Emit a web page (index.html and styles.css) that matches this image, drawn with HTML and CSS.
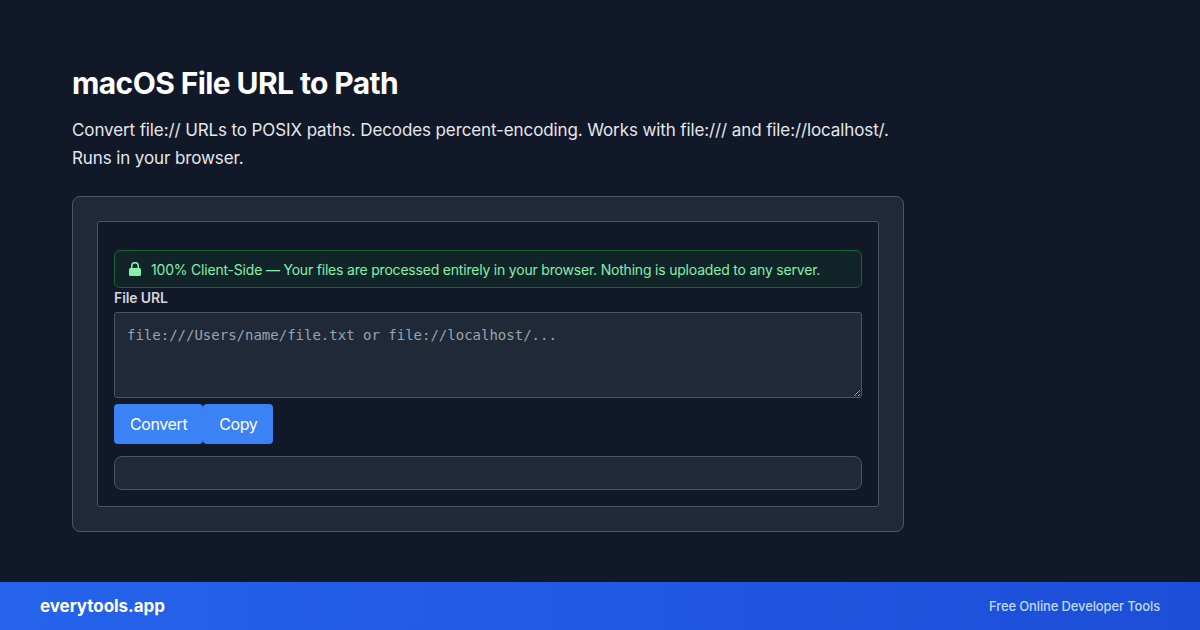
FILE: index.html
```html
<!DOCTYPE html>
<html lang="en">
<head>
    <meta charset="UTF-8">
    <meta name="viewport" content="width=device-width, initial-scale=1.0">
    <title>macOS File URL to Path</title>
    <link rel="stylesheet" href="styles.css">
</head>
<body>
    <main class="page">
        <h1>macOS File URL to Path</h1>
        <p class="intro">Convert file:// URLs to POSIX paths. Decodes percent-encoding. Works with file:/// and file://localhost/. Runs in your browser.</p>

        <div class="card">
            <div class="tool">
                <!-- Privacy notice -->
                <div class="notice">
                    <svg class="lock" width="12" height="14" viewBox="0 0 12 14" aria-hidden="true">
                        <path d="M2.75 6.5V3.9a3.25 3.25 0 0 1 6.5 0v2.6" fill="none" stroke="#86efac" stroke-width="1.5"/>
                        <rect x="0" y="6" width="12" height="8" rx="1.5" fill="#86efac"/>
                    </svg>
                    <span>100% Client-Side — Your files are processed entirely in your browser. Nothing is uploaded to any server.</span>
                </div>

                <label class="field-label" for="fileUrl">File URL</label>
                <textarea id="fileUrl" class="field-input" placeholder="file:///Users/name/file.txt or file://localhost/..."></textarea>

                <div class="actions">
                    <button class="btn">Convert</button>
                    <button class="btn">Copy</button>
                </div>

                <div class="output"></div>
            </div>
        </div>
    </main>

    <footer class="brand-bar">
        <span class="brand">everytools.app</span>
        <span class="tagline">Free Online Developer Tools</span>
    </footer>
</body>
</html>
```

FILE: styles.css
```css
* {
    box-sizing: border-box;
}
html, body {
    height: 100%;
}
body {
    margin: 0;
    display: flex;
    flex-direction: column;
    overflow: hidden;
    background-color: #111827;
    color: #f3f4f6;
    font-family: Inter, "Liberation Sans", sans-serif;
}
.page {
    flex: 1;
    width: 832px;
    margin-left: 72px;
    padding-top: 64px;
}
h1 {
    margin: 0 0 14px;
    font-size: 30px;
    line-height: 38px;
    font-weight: 700;
    letter-spacing: -0.6px;
    color: #fff;
}
.intro {
    margin: 0 0 24px;
    font-size: 17px;
    line-height: 28px;
    letter-spacing: -0.11px;
    color: #e5e7eb;
}
.card {
    padding: 24px;
    background-color: #1f2937;
    border: 1px solid #4b5563;
    border-radius: 8px;
}
.tool {
    padding: 28px 16px 16px;
    background-color: #111827;
    border: 1px solid #4b5563;
    border-radius: 3px;
}
.notice {
    display: flex;
    align-items: center;
    gap: 10px;
    height: 38px;
    padding: 0 14px;
    background-color: rgba(20, 83, 45, 0.22);
    border: 1px solid #166534;
    border-radius: 6px;
    font-size: 14px;
    letter-spacing: -0.2px;
    color: #86efac;
}
.lock {
    flex: none;
}
.field-label {
    display: block;
    font-size: 14px;
    line-height: 20px;
    font-weight: 600;
    letter-spacing: -0.1px;
    color: #d1d5db;
}
.field-input {
    display: block;
    width: 100%;
    height: 86px;
    margin-top: 4px;
    padding: 12px;
    background-color: #1f2937;
    border: 1px solid #4b5563;
    border-radius: 3px;
    color: #f3f4f6;
    font-family: "DejaVu Sans Mono", monospace;
    font-size: 14px;
    line-height: 20px;
}
.field-input::placeholder {
    color: #9ca3af;
}
.actions {
    display: flex;
    margin-top: 6px;
}
.btn {
    height: 40px;
    padding: 0 16px;
    background-color: #3b82f6;
    color: #fff;
    border: none;
    border-radius: 4px;
    font-family: inherit;
    font-size: 16px;
    letter-spacing: -0.4px;
    cursor: pointer;
}
.output {
    height: 34px;
    margin-top: 12px;
    background-color: #1f2937;
    border: 1px solid #4b5563;
    border-radius: 8px;
}
.brand-bar {
    display: flex;
    align-items: center;
    justify-content: space-between;
    height: 48px;
    padding: 0 40px;
    background: linear-gradient(90deg, #2563eb, #1d4ed8);
    color: #fff;
}
.brand {
    font-size: 17px;
    font-weight: 700;
    letter-spacing: -0.05px;
}
.tagline {
    font-size: 13px;
    font-weight: 500;
    letter-spacing: -0.13px;
    color: #bfdbfe;
}
```
